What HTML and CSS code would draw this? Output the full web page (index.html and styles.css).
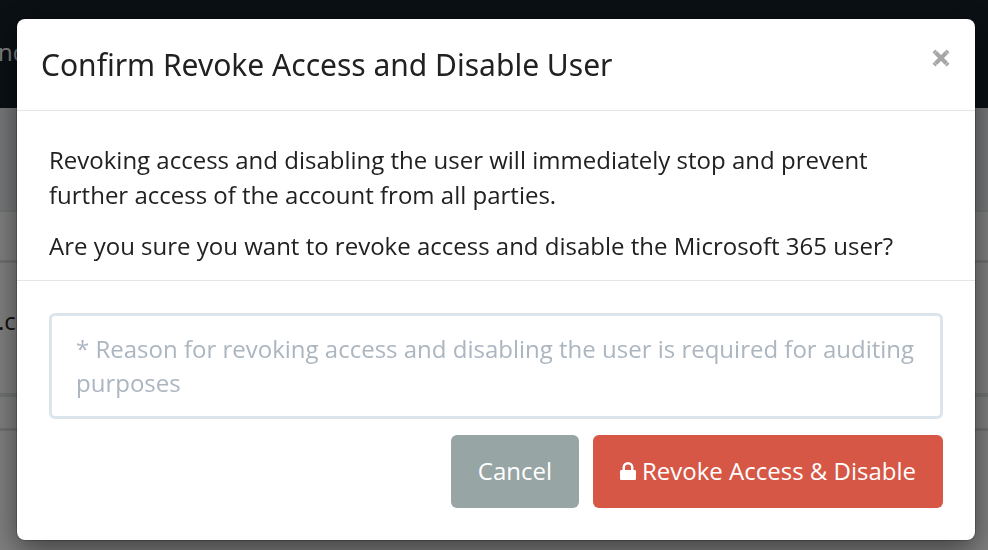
FILE: index.html
```
<!DOCTYPE html>
<html lang="en">
	<head>
		<meta charset="utf-8" />
		<meta name="viewport" content="width=device-width, initial-scale=1" />
		
		<title>Confirm Revoke Access and Disable User</title>
		
		<link rel="stylesheet" href="styles.css">
	</head>
	<body>
		<div class="page" aria-hidden="true">
			<div class="navbar">nd</div>
			<div class="toolbar"></div>
			<div class="row row-head"></div>
			<div class="row row-user">.com</div>
			<div class="row row-foot"></div>
		</div>
		
		<div class="backdrop">
			<div class="modal" role="dialog" aria-modal="true" aria-labelledby="modal-title">
				<div class="modal-header">
					<h4 id="modal-title" class="modal-title">Confirm Revoke Access and Disable User</h4>
					<button type="button" class="close" aria-label="Close">
						<svg width="18" height="18" viewBox="0 0 18 18">
							<path d="M3.500 3.500L14.500 14.500M14.500 3.500L3.500 14.500" stroke="currentColor" stroke-width="4.200" fill="none" />
							<path d="M3.500 1.800L1.800 3.500M14.500 1.800L16.200 3.500M1.800 14.500L3.500 16.200M16.200 14.500L14.500 16.200" stroke="currentColor" stroke-width="2" stroke-linecap="round" fill="none" />
						</svg>
					</button>
				</div>
				
				<div class="modal-body">
					<p>Revoking access and disabling the user will immediately stop and prevent further access of the account from all parties.</p>
					<p>Are you sure you want to revoke access and disable the Microsoft 365 user?</p>
				</div>
				
				<form class="modal-footer">
					<textarea class="reason" rows="2" required aria-label="Reason" placeholder="* Reason for revoking access and disabling the user is required for auditing purposes"></textarea>
					<div class="actions">
						<button type="button" class="btn btn-default">Cancel</button>
						<button type="submit" class="btn btn-danger">
							<svg class="lock" width="16" height="20" viewBox="0 0 16 20">
								<path d="M2.500 9V6.500a5.500 5.500 0 0 1 11 0V9h1.300q1.200 0 1.200 1.200v7.600q0 1.200-1.200 1.200H1.200q-1.200 0-1.200-1.200v-7.600Q0 9 1.200 9zM5 9h6V6.500a3 3 0 0 0-6 0z" fill="currentColor" />
							</svg>
							Revoke Access &amp; Disable
						</button>
					</div>
				</form>
			</div>
		</div>
	</body>
</html>
```

FILE: styles.css
```
* {
	margin: 0;
	padding: 0;
	box-sizing: border-box;
}

html, body {
	height: 100%;
}

body {
	overflow: hidden;
	background: #fff;
	font-family: "Open Sans", "Noto Sans", sans-serif;
	font-size: 24px;
	line-height: 35px;
	color: #212121;
}

button, textarea {
	font: inherit;
}

/* Page behind the dialog */
.page {
	display: flex;
	flex-direction: column;
	height: 100%;
	text-indent: -2px;
}

.navbar {
	height: 108px;
	padding-top: 34px;
	background: #16202a;
	color: #fff;
}

.toolbar {
	height: 104px;
	background: #ecf0f1;
	border-bottom: 2px solid #e4e8e9;
}

.row-head {
	height: 51px;
	border-bottom: 3px solid #dfe1e1;
}

.row-user {
	height: 134px;
	padding-top: 40px;
	border-bottom: 4px solid #e2e6e6;
}

.row-foot {
	height: 34px;
	border-bottom: 3px solid #dfe3e3;
}

.backdrop {
	position: fixed;
	inset: 0;
	padding: 19px 13px 10px 17px;
	overflow: hidden;
	background: rgba(0, 0, 0, 0.5);
}

/* Dialog */
.modal {
	background: #fff;
	border-radius: 8px;
	box-shadow: 0 0 0 1px rgba(0, 0, 0, 0.2), 0 10px 30px rgba(0, 0, 0, 0.5);
}

.modal-header {
	display: flex;
	justify-content: space-between;
	align-items: flex-start;
	padding: 24px;
	border-bottom: 1px solid #e5e5e5;
}

.modal-title {
	font-family: "Noto Sans", "Open Sans", sans-serif;
	font-size: 30px;
	font-weight: 400;
	line-height: 43px;
}

.close {
	display: flex;
	padding: 6px 1px;
	border: none;
	background: none;
	color: #a6a6a6;
	cursor: pointer;
}

.modal-body {
	padding: 31px 32px 1px;
	border-bottom: 1px solid #e5e5e5;
}

.modal-body p {
	padding-bottom: 16px;
}

.modal-footer {
	padding: 32px;
}

.reason {
	display: block;
	width: 100%;
	height: 106px;
	padding: 16px 24px;
	border: 3px solid #dce4ec;
	border-radius: 6px;
	background: #fff;
	line-height: 34px;
	color: #2c3e50;
	resize: none;
	outline: none;
	overflow: hidden;
}

.reason::placeholder {
	color: #acb6c0;
	opacity: 1;
}

.actions {
	display: flex;
	justify-content: flex-end;
	gap: 14px;
	padding-top: 16px;
}

.btn {
	display: flex;
	align-items: center;
	gap: 6px;
	padding: 18px 27px 20px;
	border: none;
	border-radius: 6px;
	color: #fff;
	cursor: pointer;
}

.btn-default {
	background: #98a5a5;
}

.btn-danger {
	background: #d65746;
}
```
